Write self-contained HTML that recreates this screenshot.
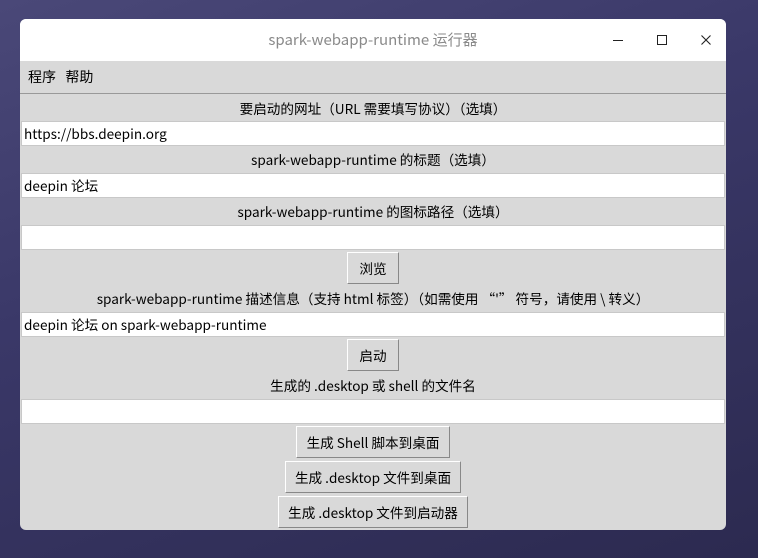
<!DOCTYPE html>
<html><head><meta charset="utf-8"><style>
*{margin:0;padding:0;box-sizing:border-box}
body{width:758px;height:558px;overflow:hidden;background:linear-gradient(160deg,#4a4878 0%,#3a3868 40%,#2c2a50 100%);font-family:"Noto Sans CJK SC","Liberation Sans",sans-serif;font-size:13.6px;color:#000;position:relative}
.win{position:absolute;left:20px;top:19px;width:706px;height:511px;background:#d9d9d9;border-radius:6px;overflow:hidden}
.title{position:absolute;left:0;top:0;width:706px;height:42px;background:#fff;text-align:center;line-height:42px;color:#8a8a8a;font-size:15px}
.ctl{position:absolute;top:15px}
.menu{position:absolute;top:42px;left:0;width:706px;height:33px;border-bottom:1px solid #999;line-height:33px;padding-left:8px;font-size:14px}
.lbl{position:absolute;left:0;width:706px;text-align:center;height:27px;line-height:27px}
.ent{position:absolute;left:1px;width:704px;height:25px;background:#fff;border:1px solid #c8c8c8;line-height:23px;padding-left:2px}
.btn{position:absolute;height:32px;border:1px solid #fff;border-right-color:#888;border-bottom-color:#888;background:#d9d9d9;text-align:center;line-height:30px}
</style></head><body>
<div class="win">
<div class="title">spark-webapp-runtime 运行器</div>
<svg class="ctl" style="left:592px" width="12" height="12"><line x1="1" y1="6.5" x2="11" y2="6.5" stroke="#222" stroke-width="1"/></svg>
<svg class="ctl" style="left:636px" width="12" height="12"><rect x="1.5" y="1.5" width="9" height="9" fill="none" stroke="#222" stroke-width="1"/></svg>
<svg class="ctl" style="left:680px" width="12" height="12"><path d="M1.5 1.5L10.5 10.5M10.5 1.5L1.5 10.5" stroke="#222" stroke-width="1.1"/></svg>
<div class="menu">程序&nbsp;&nbsp;&nbsp;帮助</div>
<div class="lbl" style="top:76px">要启动的网址（URL 需要填写协议）（选填）</div>
<div class="ent" style="top:102px">https://bbs.deepin.org</div>
<div class="lbl" style="top:127px">spark-webapp-runtime 的标题（选填）</div>
<div class="ent" style="top:154px">deepin 论坛</div>
<div class="lbl" style="top:179px">spark-webapp-runtime 的图标路径（选填）</div>
<div class="ent" style="top:206px"></div>
<div class="btn" style="left:327px;top:233px;width:52px">浏览</div>
<div class="lbl" style="top:266px">spark-webapp-runtime 描述信息（支持 html 标签）（如需使用 “'” 符号，请使用 \ 转义）</div>
<div class="ent" style="top:293px">deepin 论坛 on spark-webapp-runtime</div>
<div class="btn" style="left:327px;top:320px;width:52px">启动</div>
<div class="lbl" style="top:353px">生成的 .desktop 或 shell 的文件名</div>
<div class="ent" style="top:380px"></div>
<div class="btn" style="left:276px;top:407px;width:154px">生成 Shell 脚本到桌面</div>
<div class="btn" style="left:265px;top:442px;width:176px">生成 .desktop 文件到桌面</div>
<div class="btn" style="left:258px;top:477px;width:190px">生成 .desktop 文件到启动器</div>
</div>
</body></html>
